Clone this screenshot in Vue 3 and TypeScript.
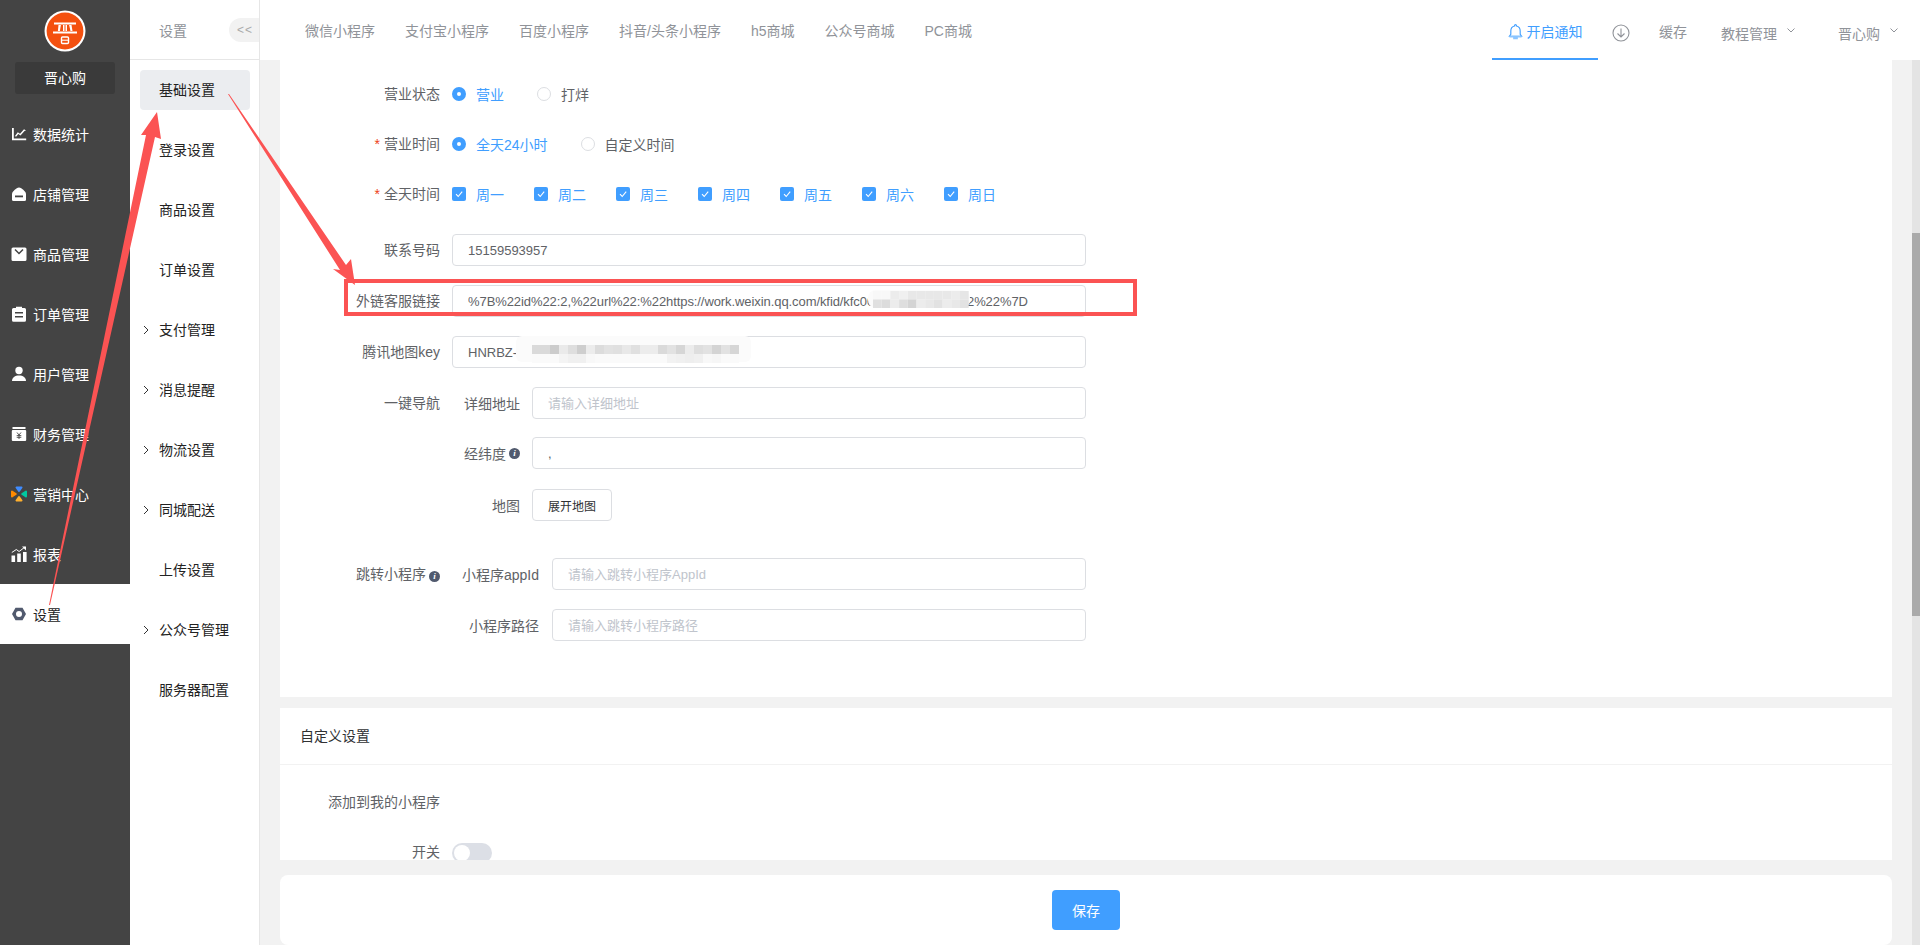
<template>
  <div class="page">
    <aside class="side">
      <div class="logo-wrap">
        <svg class="logo" viewBox="0 0 42 42" width="42" height="42">
          <circle cx="21" cy="21" r="20.5" fill="#fff" />
          <circle cx="21" cy="21" r="18.4" fill="#f4500f" />
          <path d="M10 12.500h22v2H10zM14.500 15h2.400l-1 6h-2zM25.100 15h2.400l1 6h-2zM19 15h1.500v6H19zM21.500 15H23v6h-1.500zM9 21.500h24v2H9z" fill="#fff" />
          <rect x="17.500" y="27" width="7" height="6.500" rx="1" fill="none" stroke="#fff" stroke-width="1.400" />
          <path d="M18 30.200h6" stroke="#fff" stroke-width="1.100" />
        </svg>
      </div>
      <div class="shop-name">晋心购</div>
      <ul class="side-list">
        <li v-for="m in sideMenu" :key="m.name" class="side-item" :class="{ on: m.name === '设置' }">
          <svg class="side-icon" viewBox="0 0 16 16" width="16" height="16" v-html="m.icon"></svg>
          <span>{{ m.name }}</span>
        </li>
      </ul>
    </aside>

    <nav class="sub">
      <div class="sub-head">
        <span>设置</span>
        <span class="fold">&lt;&lt;</span>
      </div>
      <ul class="sub-list">
        <li v-for="(s, i) in subMenu" :key="s.name" class="sub-item" :class="{ on: i === 0 }">
          <svg v-if="s.more" class="sub-arrow" viewBox="0 0 6 10" width="6" height="10">
            <path d="M1 1l4 4-4 4" fill="none" stroke="#333" stroke-width="1" />
          </svg>
          {{ s.name }}
        </li>
      </ul>
    </nav>

    <div class="main">
      <header class="top">
        <div class="tabs">
          <span v-for="t in tabs" :key="t" class="tab">{{ t }}</span>
        </div>
        <div class="top-right">
          <span class="notice">
            <svg viewBox="0 0 16 18" width="15" height="17">
              <path d="M8 1.600a1 1 0 0 1 1 1v.5c2.600.5 4 2.600 4 5.400v3.600l1.500 2H1.500l1.500-2V8.500C3 5.700 4.400 3.600 7 3.100v-.5a1 1 0 0 1 1-1z" fill="none" stroke="#409eff" stroke-width="1.200" />
              <path d="M1.500 14.500h13M5.500 16.300h5" stroke="#8cc5ff" stroke-width="1.800" />
            </svg>
            开启通知
          </span>
          <svg class="down" viewBox="0 0 18 18" width="18" height="18">
            <circle cx="9" cy="9" r="8" fill="none" stroke="#909399" stroke-width="1.100" />
            <path d="M9 4.500v8.500M5.500 9.500L9 13l3.500-3.500" fill="none" stroke="#909399" stroke-width="1.100" />
          </svg>
          <span class="cache">缓存</span>
          <span class="drop tut">教程管理
            <svg viewBox="0 0 8 5" width="8" height="5"><path d="M.5.5L4 4 7.500.5" fill="none" stroke="#909399" /></svg>
          </span>
          <span class="drop">晋心购
            <svg viewBox="0 0 8 5" width="8" height="5"><path d="M.5.5L4 4 7.500.5" fill="none" stroke="#909399" /></svg>
          </span>
        </div>
      </header>

      <div class="body">
        <div class="pane">
          <section class="card form-card">
            <div class="row">
              <label class="lab">营业状态</label>
              <div class="opts">
                <span class="radio checked"><i></i>营业</span>
                <span class="radio"><i></i>打烊</span>
              </div>
            </div>
            <div class="row gap18">
              <label class="lab req">营业时间</label>
              <div class="opts">
                <span class="radio checked"><i></i>全天24小时</span>
                <span class="radio"><i></i>自定义时间</span>
              </div>
            </div>
            <div class="row gap18">
              <label class="lab req">全天时间</label>
              <div class="opts">
                <span v-for="d in days" :key="d" class="check">
                  <i><svg viewBox="0 0 14 14" width="14" height="14"><path d="M4 7.200l2.200 2.300L10.200 4.600" fill="none" stroke="#fff" stroke-width="1.100" /></svg></i>{{ d }}
                </span>
              </div>
            </div>
            <div class="row gap24">
              <label class="lab">联系号码</label>
              <input class="ipt" value="15159593957" />
            </div>
            <div class="row">
              <label class="lab">外链客服链接</label>
              <input class="ipt link" value="%7B%22id%22:2,%22url%22:%22https://work.weixin.qq.com/kfid/kfc0000000000000002%22%7D" />
            </div>
            <div class="row">
              <label class="lab">腾讯地图key</label>
              <input class="ipt" value="HNRBZ-" />
            </div>
            <div class="row">
              <label class="lab">一键导航</label>
              <div class="group">
                <div class="sub-row">
                  <label class="sub-lab">详细地址</label>
                  <input class="ipt" placeholder="请输入详细地址" />
                </div>
                <div class="sub-row">
                  <label class="sub-lab">经纬度<i class="tip">i</i></label>
                  <input class="ipt comma" value="," />
                </div>
                <div class="sub-row map-row">
                  <label class="sub-lab">地图</label>
                  <button class="btn">展开地图</button>
                </div>
              </div>
            </div>
            <div class="row gap37">
              <label class="lab">跳转小程序<i class="tip">i</i></label>
              <div class="group wide">
                <div class="sub-row">
                  <label class="sub-lab">小程序appId</label>
                  <input class="ipt" placeholder="请输入跳转小程序AppId" />
                </div>
                <div class="sub-row">
                  <label class="sub-lab">小程序路径</label>
                  <input class="ipt" placeholder="请输入跳转小程序路径" />
                </div>
              </div>
            </div>
          </section>

          <section class="card custom-card">
            <h3 class="card-title">自定义设置</h3>
            <p class="custom-name">添加到我的小程序</p>
            <div class="row switch-row">
              <label class="lab">开关</label>
              <span class="switch"><i></i></span>
            </div>
          </section>

          <footer class="card foot">
            <button class="save">保存</button>
          </footer>
        </div>
        <div class="rail"><div class="thumb"></div></div>
      </div>
    </div>

    <!-- 截图上的标注：箭头、红框、打码 -->
    <svg class="marks" viewBox="0 0 1920 945" width="1920" height="945">
      <rect v-for="(r, i) in blurBase" :key="'b' + i" :x="r.x" :y="r.y" :width="r.w" :height="r.h" :rx="r.rx" fill="#fbfbfb" />
      <rect v-for="(c, i) in blurCells" :key="'c' + i" :x="c.x" :y="c.y" :width="c.w" :height="c.h" :fill="c.fill" />
      <rect x="346" y="281" width="789" height="33" fill="none" stroke="#fb5353" stroke-width="4" />
      <polygon points="49,605 146,135 141,135 157,112 161,139 155,137 50,605" fill="#fb5353" />
      <polygon points="228,94 229,94 346,265 351,259 355,285 333,269 340,270" fill="#fb5353" />
    </svg>
  </div>
</template>

<script setup lang="ts">
interface SideItem {
  name: string;
  icon: string;
}

const white = 'fill="#fff"';

const sideMenu: SideItem[] = [
  {
    name: '数据统计',
    icon: `<path d="M1 2h1.800v10.500H15.200V14.300H1z" ${white}/><path d="M3.800 10.300l3-4 2.200 1.500L13 3.200l2 1.300-1.500.4-4 4.700-2.200-1.500-2 2.400z" ${white}/>`
  },
  {
    name: '店铺管理',
    icon: `<path d="M1 7.500C2 5 5 2 8 1.500c3 .5 6 3.500 7 6v6a1.500 1.500 0 0 1-1.500 1.500h-11A1.500 1.500 0 0 1 1 13.500z" ${white}/><rect x="4" y="9.500" width="8" height="1.800" fill="#444"/>`
  },
  {
    name: '商品管理',
    icon: `<path d="M2 1.500h12A1.500 1.500 0 0 1 15.500 3v10.500A1.500 1.500 0 0 1 14 15H2a1.500 1.500 0 0 1-1.500-1.500V3A1.500 1.500 0 0 1 2 1.500z" ${white}/><path d="M4 3.500l4 4 4-4" fill="none" stroke="#444" stroke-width="1.500"/>`
  },
  {
    name: '订单管理',
    icon: `<path d="M2.500 2H5V.8h6V2h2.500A1.500 1.500 0 0 1 15 3.500v10.700a1.500 1.500 0 0 1-1.500 1.500h-11A1.500 1.500 0 0 1 1 14.200V3.500A1.500 1.500 0 0 1 2.500 2z" ${white}/><path d="M4 6h8v1.500H4zM4 10h8v1.500H4z" fill="#444"/>`
  },
  {
    name: '用户管理',
    icon: `<circle cx="8" cy="4.500" r="3.700" ${white}/><path d="M1 15c0-3.500 3-5.500 7-5.500s7 2 7 5.500z" ${white}/>`
  },
  {
    name: '财务管理',
    icon: `<rect x="1.500" y="1" width="13" height="2" ${white}/><rect x=".8" y="4" width="14.400" height="11" rx="1" ${white}/><path d="M6 6.500l2 2.500 2-2.500M5.700 9.600h4.600M5.700 11.300h4.600M8 9v4" fill="none" stroke="#444" stroke-width=".9"/>`
  },
  {
    name: '营销中心',
    icon: `<path d="M5.500 1.500h5L8 5z" fill="#3f8cff" stroke="#3f8cff" stroke-width="2" stroke-linejoin="round"/><path d="M1 5.500v5L4.800 8z" fill="#ff8a00" stroke="#ff8a00" stroke-width="2" stroke-linejoin="round"/><path d="M15 5.500v5L11.200 8z" fill="#00c9a0" stroke="#00c9a0" stroke-width="2" stroke-linejoin="round"/><path d="M5.500 14.500h5L8 11z" fill="#ffb02e" stroke="#ffb02e" stroke-width="2" stroke-linejoin="round"/>`
  },
  {
    name: '报表',
    icon: `<path d="M.5 9.500h3.600V16H.5zM6.200 7.500h3.600V16H6.200zM12 6h3.600v10H12z" ${white}/><path d="M.8 6.500l4.500-3 2.800 2L14 1" fill="none" stroke="#fff" stroke-width="1"/><path d="M11 .5h4v4z" ${white}/>`
  },
  {
    name: '设置',
    icon: `<path fill-rule="evenodd" d="M4.500 1.800h7L15 8l-3.500 6.200h-7L1 8zM8 5a3 3 0 1 0 0 6 3 3 0 0 0 0-6z" fill="#515a6e"/>`
  }
];

const subMenu = [
  { name: '基础设置', more: false },
  { name: '登录设置', more: false },
  { name: '商品设置', more: false },
  { name: '订单设置', more: false },
  { name: '支付管理', more: true },
  { name: '消息提醒', more: true },
  { name: '物流设置', more: true },
  { name: '同城配送', more: true },
  { name: '上传设置', more: false },
  { name: '公众号管理', more: true },
  { name: '服务器配置', more: false }
];

const tabs = ['微信小程序', '支付宝小程序', '百度小程序', '抖音/头条小程序', 'h5商城', '公众号商城', 'PC商城'];
const days = ['周一', '周二', '周三', '周四', '周五', '周六', '周日'];

// 打码区域的底色
const blurBase = [
  { x: 868, y: 290, w: 102, h: 18, rx: 8 },
  { x: 516, y: 336, w: 235, h: 26, rx: 6 }
];

// 马赛克格子，灰度按截图大致取
const grays1 = [248, 248, 236, 240, 232, 232, 232, 232, 232, 236, 230, 224, 220, 236, 222, 212, 236, 232, 226, 236, 232, 226];
const grays2 = [
  218, 218, 204, 234, 222, 206, 236, 220, 226, 224, 232, 224, 236, 236, 218, 226, 214, 236, 222, 226, 212, 226, 214,
  250, 250, 250, 244, 240, 240, 248, 250, 250, 250, 250, 250, 250, 250, 250, 242, 240, 238, 240, 248, 246, 250, 250
];

function cell(x: number, y: number, w: number, h: number, g: number) {
  return { x, y, w, h, fill: `rgb(${g},${g},${g})` };
}

const blurCells = [
  ...grays1.map((g, i) => cell(873 + (i % 11) * 8.7, 291 + Math.floor(i / 11) * 8.5, 8.7, 8.5, g)),
  ...grays2.map((g, i) => cell(532 + (i % 23) * 9, 345 + Math.floor(i / 23) * 9, 9, 9, g))
];
</script>

<style>
html,
body {
  margin: 0;
  overflow: hidden;
}
</style>

<style scoped>
.page {
  position: relative;
  display: flex;
  width: 1920px;
  height: 945px;
  overflow: hidden;
  font-family: "Liberation Sans", "Noto Sans CJK SC", sans-serif;
  font-size: 14px;
  color: #606266;
  background: #f2f2f2;
}

ul {
  margin: 0;
  padding: 0;
  list-style: none;
}

/* 一级菜单 */
.side {
  flex: none;
  width: 130px;
  background: #444;
  color: #fff;
}

.logo-wrap {
  display: flex;
  justify-content: center;
  padding-top: 10px;
}

.logo {
  display: block;
}

.shop-name {
  margin: 10px 15px 10px;
  height: 32px;
  line-height: 32px;
  text-align: center;
  border-radius: 3px;
  background: #3a3a3a;
}

.side-item {
  display: flex;
  align-items: center;
  gap: 6px;
  height: 60px;
  padding-left: 11px;
}

.side-item.on {
  background: #fff;
  color: #222;
}

.side-icon {
  flex: none;
}

/* 二级菜单 */
.sub {
  flex: none;
  width: 129px;
  background: #fff;
  border-right: 1px solid #e6e6e6;
  color: #222;
}

.sub-head {
  display: flex;
  align-items: center;
  justify-content: space-between;
  height: 59px;
  padding-left: 29px;
  border-bottom: 1px solid #e6e6e6;
  color: #909399;
}

.fold {
  width: 30px;
  height: 24px;
  line-height: 24px;
  padding-left: 8px;
  box-sizing: border-box;
  font-size: 12px;
  letter-spacing: 1px;
  color: #aaa;
  background: #f2f2f2;
  border-radius: 12px 0 0 12px;
}

.sub-list {
  display: flex;
  flex-direction: column;
  gap: 20px;
  padding-top: 10px;
}

.sub-item {
  position: relative;
  height: 40px;
  line-height: 41px;
  margin: 0 9px 0 10px;
  padding-left: 19px;
  border-radius: 4px;
}

.sub-item.on {
  background: #ebedf0;
}

.sub-arrow {
  position: absolute;
  left: 3px;
  top: 15px;
}

/* 顶部 */
.main {
  flex: 1;
  min-width: 0;
  display: flex;
  flex-direction: column;
}

.top {
  flex: none;
  display: flex;
  justify-content: space-between;
  height: 60px;
  padding: 0 22px 0 30px;
  background: #fff;
  color: #909399;
}

.tabs {
  display: flex;
  align-items: center;
  margin-top: -1px;
}

.tab {
  padding: 0 15px;
}

.top-right {
  display: flex;
  align-items: center;
}

.notice {
  display: flex;
  align-items: center;
  justify-content: center;
  gap: 4px;
  box-sizing: border-box;
  width: 106px;
  height: 60px;
  padding-top: 4px;
  color: #409eff;
  border-bottom: 2px solid #409eff;
}

.down {
  margin: 6px 0 0 14px;
}

.cache {
  margin: 2px 0 0 29px;
}

.drop {
  display: flex;
  align-items: center;
  gap: 10px;
  margin-top: 6px;
}

.drop svg {
  margin-top: -5px;
}

.tut {
  margin: 6px 43px 0 34px;
}

/* 内容 */
.body {
  flex: 1;
  min-height: 0;
  display: flex;
}

.pane {
  flex: 1;
  min-width: 0;
  padding: 0 20px;
}

.rail {
  flex: none;
  width: 8px;
  background: #e4e4e4;
}

.thumb {
  height: 383px;
  margin-top: 173px;
  background: #aaa;
}

.card {
  background: #fff;
}

.form-card {
  height: 637px;
  padding-top: 18px;
  box-sizing: border-box;
}

.row {
  display: flex;
  align-items: flex-start;
  margin-top: 19px;
}

.row:first-child {
  margin-top: 0;
}

.row.gap18 {
  margin-top: 18px;
}

.row.gap24 {
  margin-top: 24px;
}

.row.gap37 {
  margin-top: 37px;
}

.lab {
  flex: none;
  width: 160px;
  margin-right: 12px;
  line-height: 32px;
  text-align: right;
}

.req::before {
  content: "*";
  margin-right: 4px;
  color: #ed4014;
}

.opts {
  display: flex;
  align-items: center;
  height: 32px;
}

.radio {
  display: flex;
  align-items: center;
  gap: 10px;
  margin-right: 33px;
}

.radio i {
  width: 14px;
  height: 14px;
  box-sizing: border-box;
  border: 1px solid #dcdee2;
  border-radius: 50%;
  background: #fff;
}

.radio.checked {
  color: #409eff;
}

.radio.checked i {
  border: 5px solid #409eff;
}

.check {
  display: flex;
  align-items: center;
  gap: 10px;
  width: 82px;
  color: #409eff;
}

.check i {
  width: 14px;
  height: 14px;
  border-radius: 2px;
  background: #409eff;
}

.check svg {
  display: block;
}

.ipt {
  display: block;
  width: 634px;
  height: 32px;
  box-sizing: border-box;
  padding: 0 15px;
  border: 1px solid #dcdee2;
  border-radius: 4px;
  outline: none;
  font: inherit;
  font-size: 13px;
  color: #606266;
  background: #fff;
}

.ipt::placeholder {
  color: #c0c4cc;
}

.link {
  letter-spacing: -0.08px;
}

.group {
  display: flex;
  flex-direction: column;
  gap: 18px;
}

.group.wide {
  gap: 19px;
}

.sub-row {
  display: flex;
  align-items: center;
}

.map-row {
  margin-top: 2px;
}

.sub-lab {
  display: flex;
  align-items: center;
  justify-content: flex-end;
  gap: 3px;
  flex: none;
  width: 68px;
  margin-right: 12px;
}

.group .ipt {
  width: 554px;
}

.group.wide .sub-lab {
  width: 87px;
  margin-right: 13px;
}

.group.wide .ipt {
  width: 534px;
}

.tip {
  display: inline-block;
  width: 11px;
  height: 11px;
  margin-left: 3px;
  line-height: 11px;
  border-radius: 50%;
  text-align: center;
  font-family: "Liberation Serif", serif;
  font-size: 9px;
  font-weight: 700;
  color: #fff;
  background: #515a6e;
}

.sub-lab .tip {
  margin-left: 0;
}

.btn {
  width: 80px;
  height: 32px;
  padding: 0;
  border: 1px solid #dcdee2;
  border-radius: 4px;
  font: inherit;
  font-size: 12px;
  color: #303133;
  background: #fff;
}

.custom-card {
  height: 152px;
  margin-top: 11px;
  overflow: hidden;
}

.card-title {
  height: 56px;
  margin: 0;
  padding-left: 20px;
  line-height: 57px;
  font-size: 14px;
  font-weight: 400;
  color: #303133;
  border-bottom: 1px solid #f2f2f2;
}

.custom-name {
  margin: 27px 0 0 48px;
  line-height: 20px;
}

.switch-row {
  margin-top: 24px;
}

.switch {
  display: block;
  width: 40px;
  height: 20px;
  margin-top: 7px;
  border-radius: 10px;
  background: #dcdfe6;
}

.switch i {
  display: block;
  width: 16px;
  height: 16px;
  margin: 2px;
  border-radius: 50%;
  background: #fff;
}

.foot {
  display: flex;
  justify-content: center;
  align-items: center;
  height: 70px;
  margin-top: 15px;
  border-radius: 8px;
}

.save {
  width: 68px;
  height: 40px;
  padding: 0;
  border: 0;
  border-radius: 4px;
  font: inherit;
  color: #fff;
  background: #409eff;
}

.marks {
  position: absolute;
  left: 0;
  top: 0;
  pointer-events: none;
}
</style>
